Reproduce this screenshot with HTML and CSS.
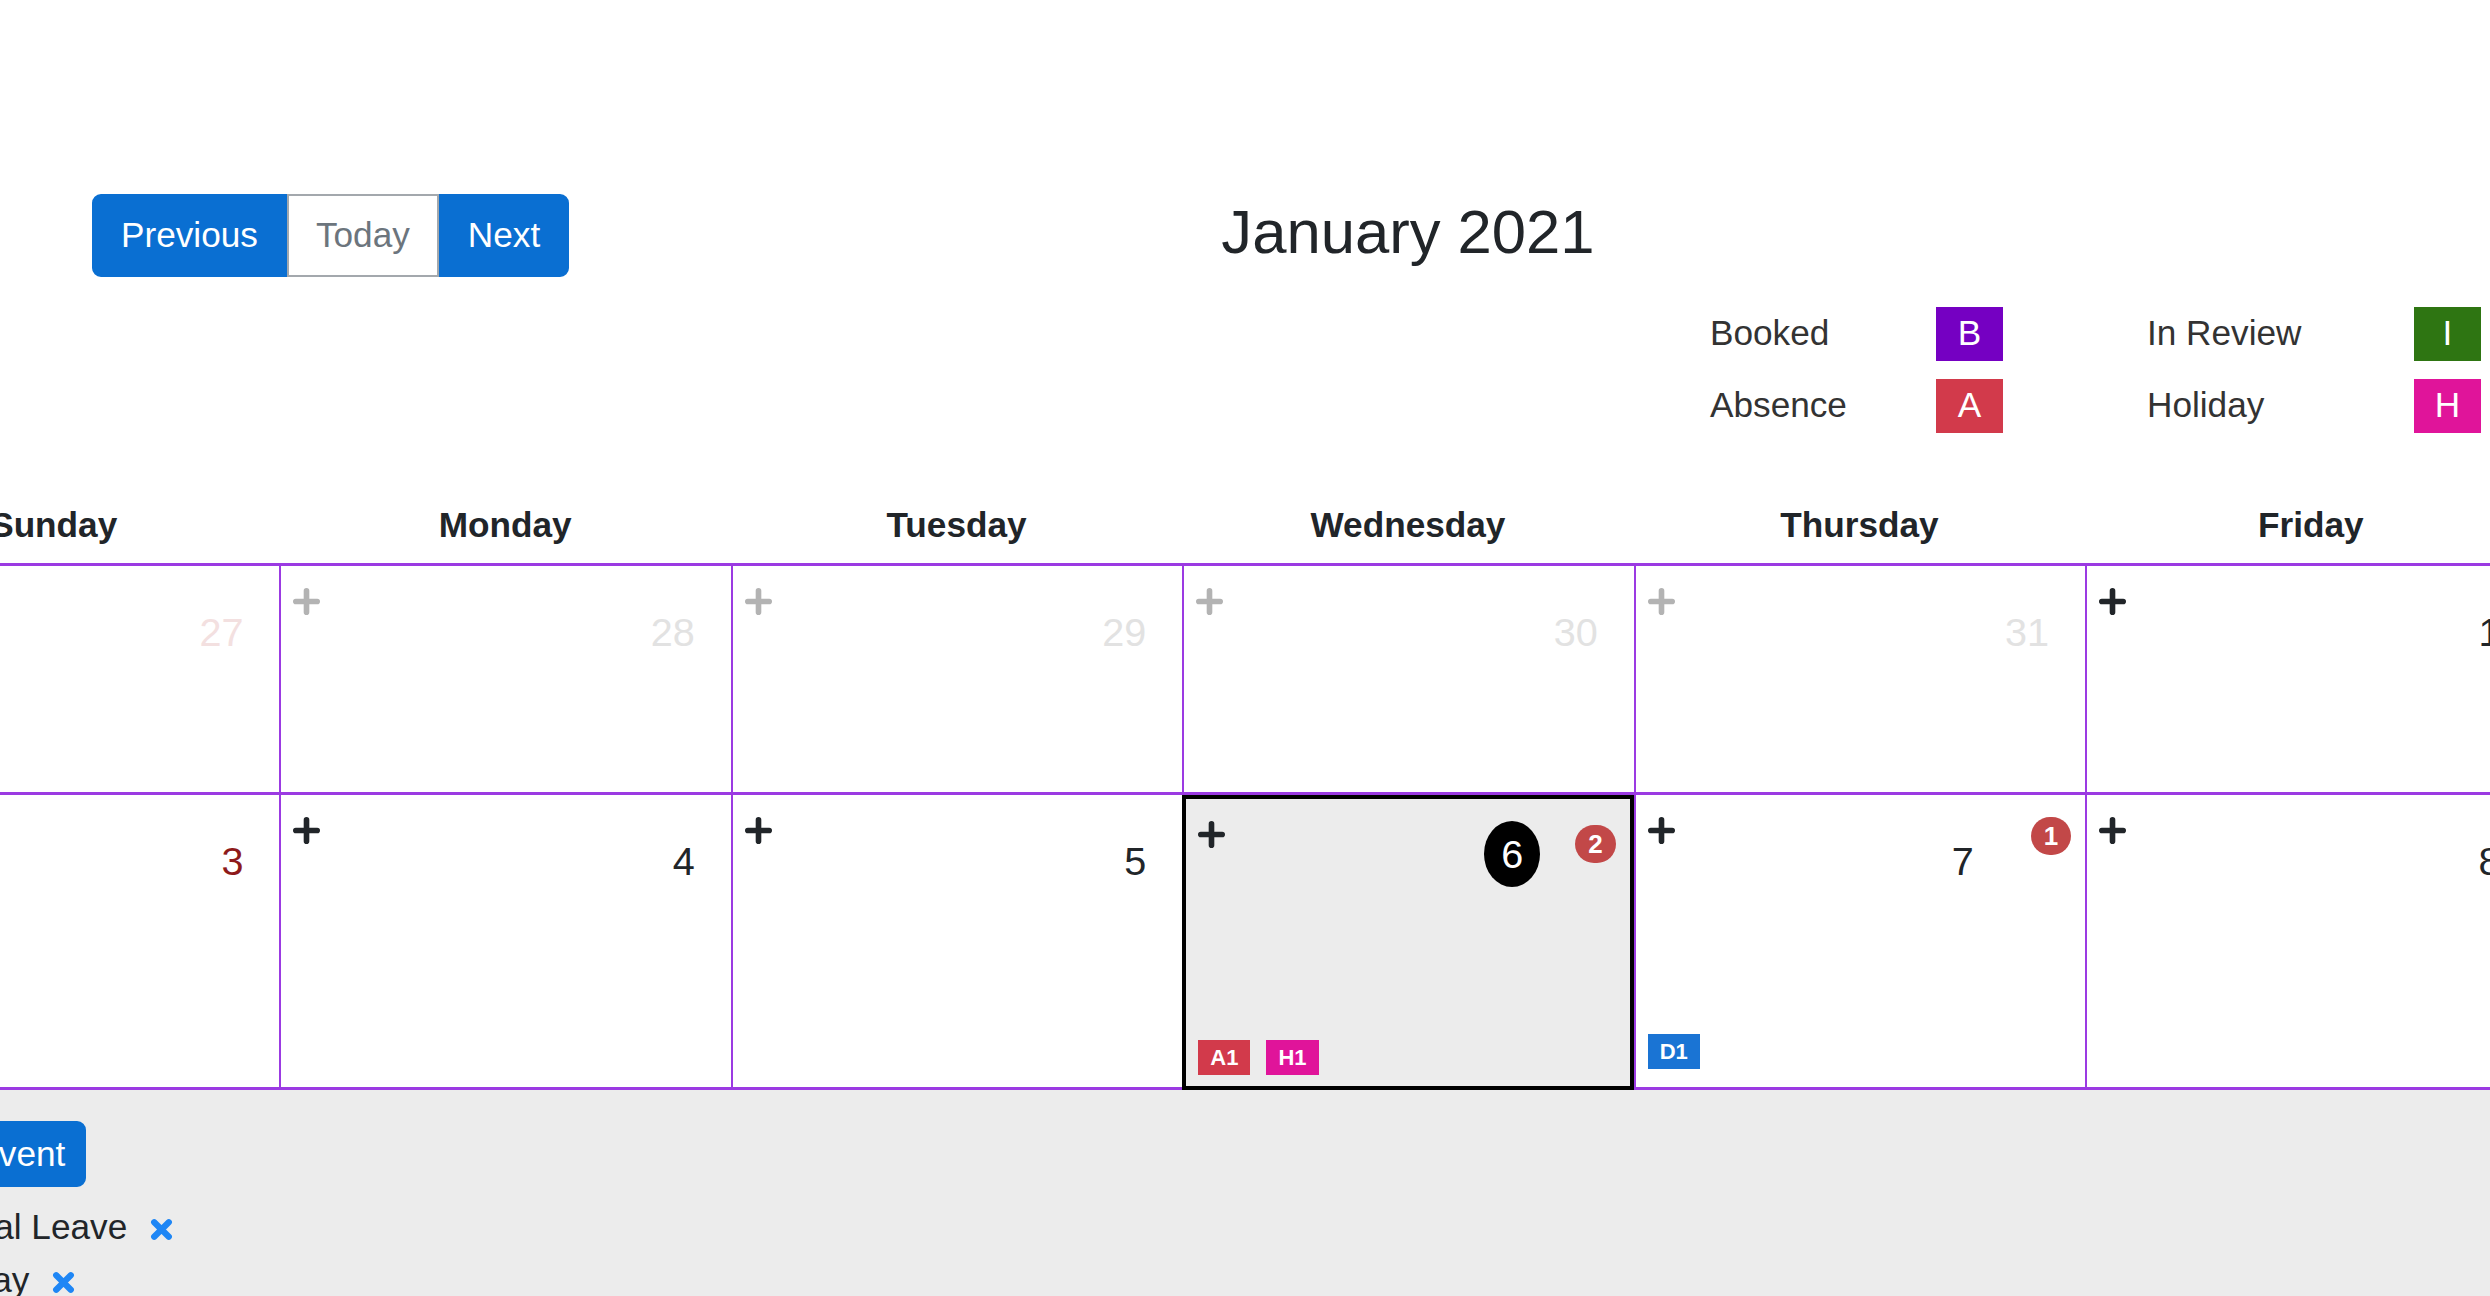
FILE: index.html
```html
<!DOCTYPE html>
<html lang="en">
<head>
    <meta charset="UTF-8">
    <meta name="viewport" content="width=device-width, initial-scale=1.0">
    <title>Calendar</title>
    <link rel="stylesheet" href="styles.css">
</head>
<body>
    <div class="wrap">
        <div class="toolbar">
            <div class="nav">
                <button class="btn btn-blue prev">Previous</button><button class="btn btn-light">Today</button><button class="btn btn-blue next">Next</button>
            </div>
            <h3 class="title">January 2021</h3>
            <div></div>
        </div>

        <div class="legend">
            <div class="legend-item"><span class="label">Booked</span><span class="key booked">B</span></div>
            <div class="legend-item"><span class="label">In Review</span><span class="key review">I</span></div>
            <div class="legend-item"><span class="label">Absence</span><span class="key absence">A</span></div>
            <div class="legend-item"><span class="label">Holiday</span><span class="key holiday">H</span></div>
        </div>

        <div class="weekdays">
            <div>Sunday</div>
            <div>Monday</div>
            <div>Tuesday</div>
            <div>Wednesday</div>
            <div>Thursday</div>
            <div>Friday</div>
            <div>Saturday</div>
        </div>

        <div class="month">
            <!-- week 1 -->
            <div class="day other sun">
                <div class="top"><div class="date"><span class="num">27</span></div></div>
            </div>
            <div class="day other">
                <div class="top">
                    <span class="add"><svg viewBox="0 0 24 24"><path d="M9.5 2.5a2.5 2.5 0 0 1 5 0v7h7a2.5 2.5 0 0 1 0 5h-7v7a2.5 2.5 0 0 1-5 0v-7h-7a2.5 2.5 0 0 1 0-5h7z"/></svg></span>
                    <div class="date"><span class="num">28</span></div>
                </div>
            </div>
            <div class="day other">
                <div class="top">
                    <span class="add"><svg viewBox="0 0 24 24"><path d="M9.5 2.5a2.5 2.5 0 0 1 5 0v7h7a2.5 2.5 0 0 1 0 5h-7v7a2.5 2.5 0 0 1-5 0v-7h-7a2.5 2.5 0 0 1 0-5h7z"/></svg></span>
                    <div class="date"><span class="num">29</span></div>
                </div>
            </div>
            <div class="day other">
                <div class="top">
                    <span class="add"><svg viewBox="0 0 24 24"><path d="M9.5 2.5a2.5 2.5 0 0 1 5 0v7h7a2.5 2.5 0 0 1 0 5h-7v7a2.5 2.5 0 0 1-5 0v-7h-7a2.5 2.5 0 0 1 0-5h7z"/></svg></span>
                    <div class="date"><span class="num">30</span></div>
                </div>
            </div>
            <div class="day other">
                <div class="top">
                    <span class="add"><svg viewBox="0 0 24 24"><path d="M9.5 2.5a2.5 2.5 0 0 1 5 0v7h7a2.5 2.5 0 0 1 0 5h-7v7a2.5 2.5 0 0 1-5 0v-7h-7a2.5 2.5 0 0 1 0-5h7z"/></svg></span>
                    <div class="date"><span class="num">31</span></div>
                </div>
            </div>
            <div class="day">
                <div class="top">
                    <span class="add"><svg viewBox="0 0 24 24"><path d="M9.5 2.5a2.5 2.5 0 0 1 5 0v7h7a2.5 2.5 0 0 1 0 5h-7v7a2.5 2.5 0 0 1-5 0v-7h-7a2.5 2.5 0 0 1 0-5h7z"/></svg></span>
                    <div class="date"><span class="num">1</span></div>
                </div>
            </div>
            <div class="day">
                <div class="top">
                    <span class="add"><svg viewBox="0 0 24 24"><path d="M9.5 2.5a2.5 2.5 0 0 1 5 0v7h7a2.5 2.5 0 0 1 0 5h-7v7a2.5 2.5 0 0 1-5 0v-7h-7a2.5 2.5 0 0 1 0-5h7z"/></svg></span>
                    <div class="date"><span class="num">2</span></div>
                </div>
            </div>

            <!-- week 2 -->
            <div class="day sun">
                <div class="top"><div class="date"><span class="num">3</span></div></div>
            </div>
            <div class="day">
                <div class="top">
                    <span class="add"><svg viewBox="0 0 24 24"><path d="M9.5 2.5a2.5 2.5 0 0 1 5 0v7h7a2.5 2.5 0 0 1 0 5h-7v7a2.5 2.5 0 0 1-5 0v-7h-7a2.5 2.5 0 0 1 0-5h7z"/></svg></span>
                    <div class="date"><span class="num">4</span></div>
                </div>
            </div>
            <div class="day">
                <div class="top">
                    <span class="add"><svg viewBox="0 0 24 24"><path d="M9.5 2.5a2.5 2.5 0 0 1 5 0v7h7a2.5 2.5 0 0 1 0 5h-7v7a2.5 2.5 0 0 1-5 0v-7h-7a2.5 2.5 0 0 1 0-5h7z"/></svg></span>
                    <div class="date"><span class="num">5</span></div>
                </div>
            </div>
            <div class="day today">
                <div class="top">
                    <span class="add"><svg viewBox="0 0 24 24"><path d="M9.5 2.5a2.5 2.5 0 0 1 5 0v7h7a2.5 2.5 0 0 1 0 5h-7v7a2.5 2.5 0 0 1-5 0v-7h-7a2.5 2.5 0 0 1 0-5h7z"/></svg></span>
                    <div class="date"><span class="num">6</span><span class="count">2</span></div>
                </div>
                <div class="events">
                    <span class="tag absence">A1</span>
                    <span class="tag holiday">H1</span>
                </div>
            </div>
            <div class="day">
                <div class="top">
                    <span class="add"><svg viewBox="0 0 24 24"><path d="M9.5 2.5a2.5 2.5 0 0 1 5 0v7h7a2.5 2.5 0 0 1 0 5h-7v7a2.5 2.5 0 0 1-5 0v-7h-7a2.5 2.5 0 0 1 0-5h7z"/></svg></span>
                    <div class="date"><span class="num">7</span><span class="count">1</span></div>
                </div>
                <div class="events">
                    <span class="tag draft">D1</span>
                </div>
            </div>
            <div class="day">
                <div class="top">
                    <span class="add"><svg viewBox="0 0 24 24"><path d="M9.5 2.5a2.5 2.5 0 0 1 5 0v7h7a2.5 2.5 0 0 1 0 5h-7v7a2.5 2.5 0 0 1-5 0v-7h-7a2.5 2.5 0 0 1 0-5h7z"/></svg></span>
                    <div class="date"><span class="num">8</span></div>
                </div>
            </div>
            <div class="day">
                <div class="top">
                    <span class="add"><svg viewBox="0 0 24 24"><path d="M9.5 2.5a2.5 2.5 0 0 1 5 0v7h7a2.5 2.5 0 0 1 0 5h-7v7a2.5 2.5 0 0 1-5 0v-7h-7a2.5 2.5 0 0 1 0-5h7z"/></svg></span>
                    <div class="date"><span class="num">9</span></div>
                </div>
            </div>
        </div>

        <div class="panel">
            <button class="btn btn-blue add-event">Add Event</button>
            <ul class="event-list">
                <li>Annual Leave <span class="remove"><svg viewBox="0 0 24 24"><path d="M5 5l14 14M19 5L5 19"/></svg></span></li>
                <li>Holiday <span class="remove"><svg viewBox="0 0 24 24"><path d="M5 5l14 14M19 5L5 19"/></svg></span></li>
            </ul>
        </div>
    </div>
</body>
</html>
```

FILE: styles.css
```css
body {
    margin: 0;
    font-family: "Liberation Sans", Arial, sans-serif;
    font-size: 35.2px;
    line-height: 1.5;
    color: #212529;
    background: #fff;
    overflow: hidden;
}
.wrap {
    width: 3160px;
    margin-left: -172px;
}

/* toolbar */
.toolbar {
    display: grid;
    grid-template-columns: 1fr auto 1fr;
    align-items: start;
    padding-top: 194px;
}
.nav {
    display: flex;
    padding-left: 264px;
}
.btn {
    font: inherit;
    line-height: 52.8px;
    padding: 13px 27px;
    border: 2px solid transparent;
    cursor: pointer;
}
.btn-blue {
    background-color: #0a6fd2;
    border-color: #0a6fd2;
    color: #fff;
}
.btn-light {
    background-color: #fff;
    border-color: #a3a8ad;
    color: #6c757d;
}
.prev {
    border-radius: 9px 0 0 9px;
}
.next {
    border-radius: 0 9px 9px 0;
}
.title {
    margin: 1px 0 0;
    font-size: 61.6px;
    font-weight: 400;
    line-height: 1.2;
    color: #212529;
}

/* legend */
.legend {
    display: grid;
    grid-template-columns: 293px 334px;
    column-gap: 144px;
    row-gap: 18px;
    margin: 30px 0 0 1882px;
}
.legend-item {
    display: flex;
    align-items: center;
    height: 54px;
}
.legend-item .label {
    flex: 1;
    color: #333;
}
.key {
    width: 67px;
    height: 54px;
    display: flex;
    align-items: center;
    justify-content: center;
    color: #fff;
}
.booked { background-color: #7500c2; }
.review { background-color: #2e7512; }
.absence { background-color: #d23a4b; }
.holiday { background-color: #e0149a; }
.draft { background-color: #1a74d4; }

/* calendar */
.weekdays {
    display: grid;
    grid-template-columns: repeat(7, 1fr);
    margin-top: 66px;
    padding-bottom: 11px;
    text-align: center;
    font-weight: bold;
}
.month {
    display: grid;
    grid-template-columns: repeat(7, 1fr);
    grid-template-rows: 229px 295px;
    border-top: 3px solid #9b3ae2;
}
.day {
    display: flex;
    flex-direction: column;
    padding: 22px 19px 18px 12px;
    border-left: 2px solid #9b3ae2;
    border-bottom: 3px solid #9b3ae2;
    min-width: 0;
}
.day.today {
    border: 4px solid #000;
    background-color: #ececec;
    padding-bottom: 11px;
}
.top {
    display: flex;
    align-items: flex-start;
}
.add svg {
    display: block;
    width: 27px;
    height: 27px;
    fill: #212529;
}
.other .add svg {
    fill: #b3b3b3;
}
.date {
    display: flex;
    align-items: flex-start;
    margin-left: auto;
}
.num {
    font-size: 39.6px;
    line-height: 46px;
    padding: 8px 17px;
    margin-top: 13px;
    border-radius: 50%;
}
.sun .num {
    color: #8e1a1a;
}
.other .num {
    color: #e2e2e2;
}
.other.sun .num {
    color: #f3e0e0;
}
.today .num {
    background-color: #000;
    color: #fff;
    padding: 10px 17px;
    margin-top: 0;
}
.count {
    margin: 0 -5px 0 40px;
    padding: 6px 13px;
    font-size: 26px;
    line-height: 26px;
    font-weight: bold;
    color: #fff;
    background-color: #c24848;
    border-radius: 20px;
}
.today .count {
    margin-left: 35px;
    margin-top: 4px;
}
.events {
    margin-top: auto;
    display: flex;
    gap: 16px;
}
.tag {
    padding: 5px 12px;
    font-size: 22px;
    line-height: 25px;
    font-weight: bold;
    color: #fff;
}

/* bottom panel */
.panel {
    background-color: #ececec;
    padding: 31px 0 0 54px;
    min-height: 400px;
}
.add-event {
    padding: 5px 19px;
    border-radius: 9px;
}
.event-list {
    list-style: none;
    margin: 14px 0 0 30px;
    padding: 0;
}
.event-list li {
    line-height: 52.8px;
}
.remove svg {
    width: 25px;
    height: 25px;
    margin-left: 12px;
    vertical-align: -3px;
    fill: none;
    stroke: #1e86f5;
    stroke-width: 6;
    stroke-linecap: round;
}
```
